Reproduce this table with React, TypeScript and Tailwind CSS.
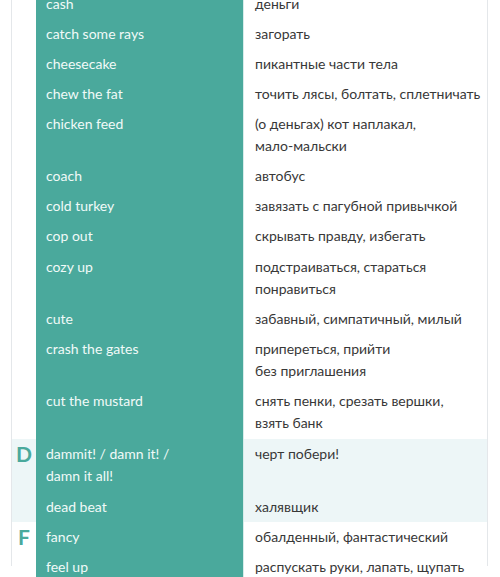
const rows: { letter?: string; en: string[]; ru: string[]; band?: boolean; pad?: string }[] = [
  { en: ["cash"], ru: ["деньги"] },
  { en: ["catch some rays"], ru: ["загорать"] },
  { en: ["cheesecake"], ru: ["пикантные части тела"] },
  { en: ["chew the fat"], ru: ["точить лясы, болтать, сплетничать"] },
  { en: ["chicken feed"], ru: ["(о деньгах) кот наплакал,", "мало-мальски"] },
  { en: ["coach"], ru: ["автобус"] },
  { en: ["cold turkey"], ru: ["завязать с пагубной привычкой"] },
  { en: ["cop out"], ru: ["скрывать правду, избегать"] },
  { en: ["cozy up"], ru: ["подстраиваться, стараться", "понравиться"], pad: "pt-[5px] pb-[4px]" },
  { en: ["cute"], ru: ["забавный, симпатичный, милый"] },
  { en: ["crash the gates"], ru: ["припереться, прийти", "без приглашения"] },
  { en: ["cut the mustard"], ru: ["снять пенки, срезать вершки,", "взять банк"], pad: "pt-[4px] pb-[5px]" },
  { letter: "D", band: true, en: ["dammit! / damn it! /", "damn it all!"], ru: ["черт побери!"], pad: "pt-[4px] pb-[5px]" },
  { band: true, en: ["dead beat"], ru: ["халявщик"] },
  { letter: "F", en: ["fancy"], ru: ["обалденный, фантастический"] },
  { en: ["feel up"], ru: ["распускать руки, лапать, щупать"] },
];

const marks = [
  { x: 378, y: 44 },
  { x: 388, y: 198 },
  { x: 302, y: 275 },
  { x: 388, y: 354 },
  { x: 302, y: 432 },
  { x: 388, y: 508 },
];

export default function App() {
  return (
    <div
      className="relative w-[500px] h-[577px] overflow-hidden bg-white"
      style={{ fontFamily: "Lato, 'Open Sans', sans-serif" }}
    >
      <div className="ml-[11px] w-[477px] h-full border-x border-[#e4e7ea] -mt-[11px]">
        {rows.map((r, i) => (
          <div key={i} className={`flex ${r.band ? "bg-[#edf6f7]" : "bg-white"}`}>
            <div className={`w-[24px] shrink-0 flex justify-center text-[21px] font-bold leading-[22px] text-[#4aa99c] ${r.pad ?? "py-[4px]"}`}>
              {r.letter}
            </div>
            <div className={`w-[207px] shrink-0 bg-[#4aa99c] pl-[10px] text-[14px] leading-[22px] text-[#f1faf8] ${r.pad ?? "py-[4px]"}`}>
              {r.en.map((t, j) => (
                <div key={j}>{t}</div>
              ))}
            </div>
            <div className={`flex-1 border-l border-[#d7ecea] pl-[11px] text-[14px] leading-[22px] text-[#383838] ${r.pad ?? "py-[4px]"}`}>
              {r.ru.map((t, j) => (
                <div key={j}>{t}</div>
              ))}
            </div>
          </div>
        ))}
      </div>
      {marks.map((m, i) => (
        <div
          key={i}
          className="absolute text-[32px] font-bold tracking-[2px] text-black/[0.022] pointer-events-none"
          style={{ left: m.x, top: m.y }}
        >
          ADME
        </div>
      ))}
    </div>
  );
}
